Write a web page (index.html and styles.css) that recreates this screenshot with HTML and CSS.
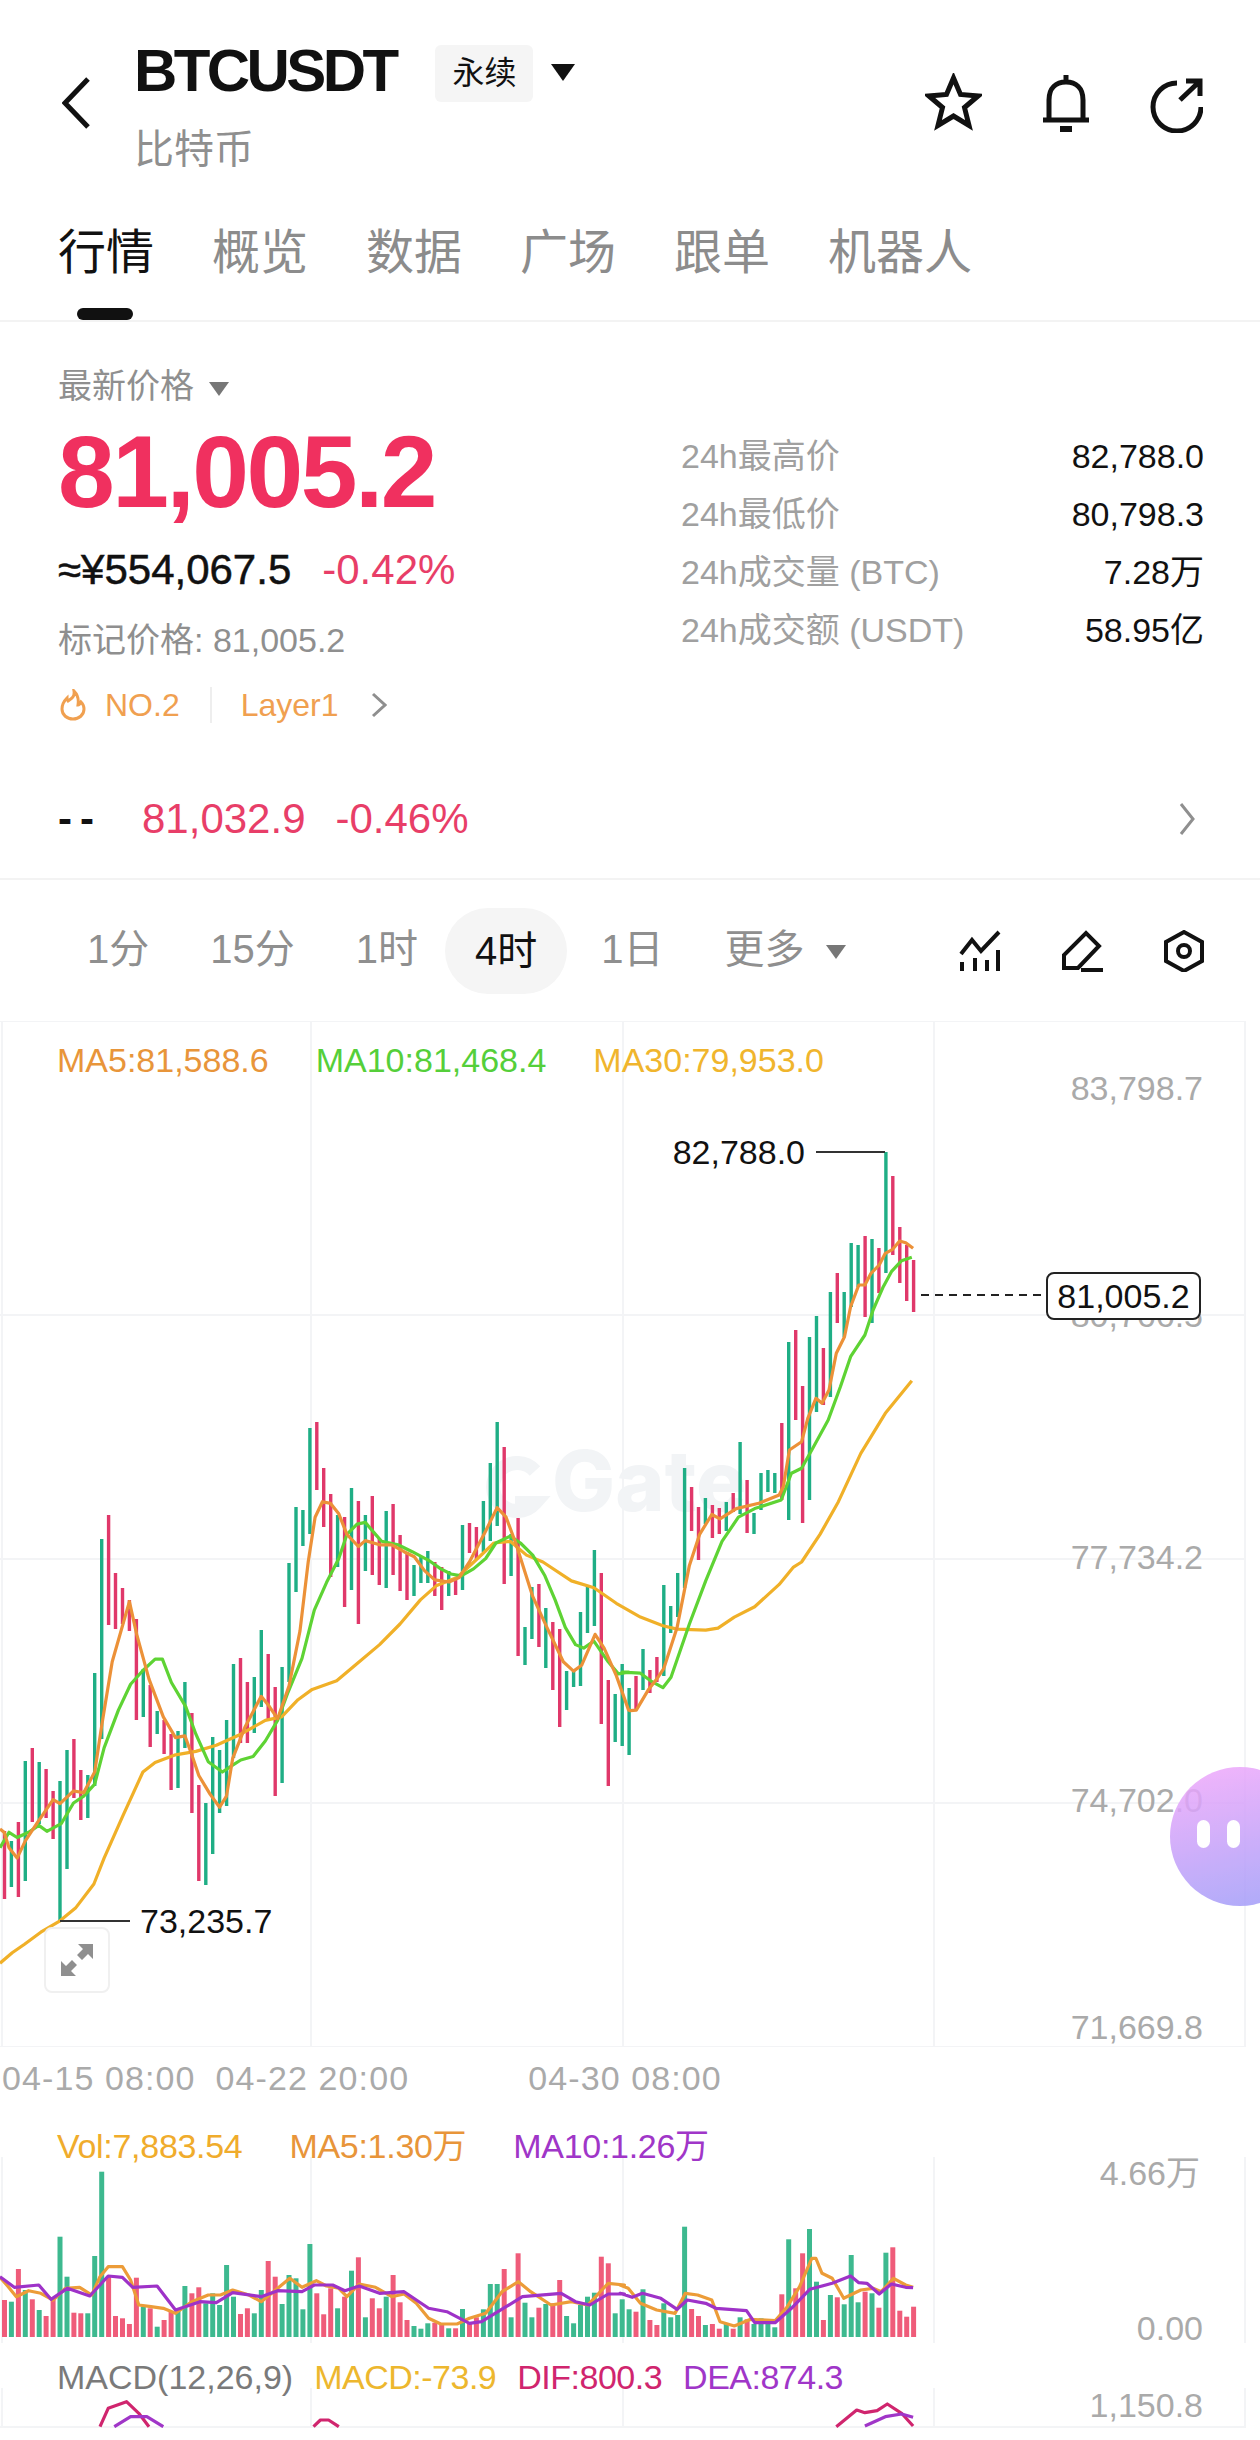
FILE: index.html
```html
<!DOCTYPE html>
<html lang="zh-CN">
<head>
    <meta charset="UTF-8">
    <meta name="viewport" content="width=device-width, initial-scale=1.0">
    <title>BTCUSDT 永续</title>
    <link rel="stylesheet" href="styles.css">
</head>
<body>
    <!-- Cabeçalho -->
    <header class="topbar">
        <svg class="back" viewBox="0 0 28 52"><path d="M26 2 3 26l23 24"/></svg>
        <div class="title">
            <div class="title-row">
                <span class="symbol">BTCUSDT</span>
                <span class="badge">永续</span>
                <span class="caret caret-dark"></span>
            </div>
            <div class="subname">比特币</div>
        </div>
        <div class="top-icons">
            <svg class="icon-star" viewBox="0 0 57 60"><path d="M28.500 5l7 16.500 17.500 1.500-13.500 11.500 4.500 18-15.500-9.500-15.500 9.500 4.500-18L4 23l17.500-1.500z"/></svg>
            <svg class="icon-bell" viewBox="0 0 50 60"><path d="M8 46V27C8 15 15 9 25 9s17 6 17 18v19M2 47h46M25 2v6"/><rect class="solid" x="19" y="53" width="12" height="6"/></svg>
            <svg class="icon-share" viewBox="0 0 53 60"><path d="M51 34A24 24 0 1 1 27 10M30 27 49 9M36 8h14v15"/></svg>
        </div>
    </header>

    <nav class="tabs">
        <span class="tab tab-active">行情</span>
        <span class="tab">概览</span>
        <span class="tab">数据</span>
        <span class="tab">广场</span>
        <span class="tab">跟单</span>
        <span class="tab">机器人</span>
    </nav>

    <!-- Preço -->
    <section class="summary">
        <div class="quote">
            <div class="price-label">最新价格 <span class="caret caret-gray"></span></div>
            <div class="big-price">81,005.2</div>
            <div class="cny-row">
                <span class="cny">≈¥554,067.5</span>
                <span class="down">-0.42%</span>
            </div>
            <div class="mark">标记价格: 81,005.2</div>
            <div class="tags">
                <svg class="flame" viewBox="0 0 26 32"><path d="M14 2c1 6-3 8-6 10-1-1-1-2-1-3-3 3-5 7-5 11 0 6 5 10 11 10s11-4 11-10c0-3-1-5-3-7-1 2-2 3-3 3 1-6-1-11-4-14z"/></svg>
                <span class="tag-no">NO.2</span>
                <span class="tag-layer">Layer1</span>
                <svg class="chevron" viewBox="0 0 16 26"><path d="M2 2l12 11L2 24"/></svg>
            </div>
        </div>
        <div class="stats">
            <div class="stat"><span>24h最高价</span><b>82,788.0</b></div>
            <div class="stat"><span>24h最低价</span><b>80,798.3</b></div>
            <div class="stat"><span>24h成交量 (BTC)</span><b>7.28万</b></div>
            <div class="stat"><span>24h成交额 (USDT)</span><b>58.95亿</b></div>
        </div>
    </section>

    <div class="ticker">
        <span class="dashes">--</span>
        <span class="down">81,032.9</span>
        <span class="down">-0.46%</span>
        <svg class="chevron ticker-arrow" viewBox="0 0 16 34"><path d="M2 2l12 15L2 32"/></svg>
    </div>

    <!-- Períodos -->
    <div class="periods">
        <span>1分</span>
        <span>15分</span>
        <span>1时</span>
        <span class="period-active">4时</span>
        <span>1日</span>
        <span class="more">更多 <i class="caret caret-gray"></i></span>
        <div class="period-icons">
            <svg viewBox="0 0 42 42"><path d="M2 24 13 10l9 11L40 2M3 32v9M16 28v13M28 30v11M39 20v21"/></svg>
            <svg viewBox="0 0 42 42"><path d="M3 38V25L25 3l13 13-21 22zM20 40h22"/></svg>
            <svg viewBox="0 0 42 42"><path d="M21 2l18 10v19L21 41 3 31V12z"/><circle cx="21" cy="21" r="6"/></svg>
        </div>
    </div>

    <!-- Gráfico principal -->
    <section class="pane pane-main">
        <svg class="chart" viewBox="0 1021 1260 1026" width="1260" height="1026">
            <g class="grid">
                <path d="M2 1021V2047M311 1021V2047M623 1021V2047M934 1021V2047M1245 1021V2047"/>
                <path d="M0 1021H1245M0 1315H1245M0 1559H1245M0 1803H1245M0 2047H1245"/>
            </g>
            <path class="gate-arc" d="M535 1471a24 24 0 1 0 0 32h-20"/>
            <text class="gate" x="552" y="1511">Gate</text>
            <g id="candles"></g>
            <polyline id="ma30" class="ma ma30"/>
            <polyline id="ma10" class="ma ma10"/>
            <polyline id="ma5" class="ma ma5"/>

            <path class="marker" d="M816 1152H885M60 1921H130"/>
            <text class="mark-text" x="805" y="1164" text-anchor="end">82,788.0</text>
            <text class="mark-text" x="140" y="1933">73,235.7</text>

            <g class="axis">
                <text x="1203" y="1100">83,798.7</text>
                <text x="1203" y="1327">80,766.5</text>
                <text x="1203" y="1569">77,734.2</text>
                <text x="1203" y="1812">74,702.0</text>
                <text x="1203" y="2039">71,669.8</text>
            </g>
            <path class="last-line" d="M921 1295H1042"/>
        </svg>
        <div class="legend legend-main">
            <span class="c-ma5">MA5:81,588.6</span>
            <span class="c-ma10">MA10:81,468.4</span>
            <span class="c-ma30">MA30:79,953.0</span>
        </div>
        <div class="last-tag">81,005.2</div>
        <div class="expand">
            <svg viewBox="0 0 34 34"><path d="M33 1v15l-5-5-6 6-5-5 6-6-5-5zM1 33V18l5 5 6-6 5 5-6 6 5 5z"/></svg>
        </div>
    </section>

    <div class="time-axis">
        <span>04-15 08:00</span>
        <span>04-22 20:00</span>
        <span class="time-third">04-30 08:00</span>
    </div>

    <!-- Volume -->
    <section class="pane pane-vol">
        <svg class="chart" viewBox="0 2106 1260 244" width="1260" height="244">
            <path class="grid-line" d="M2 2157V2343M311 2157V2343M623 2157V2343M934 2157V2343M1245 2157V2343"/>
            <g id="volumes"></g>
            <polyline id="vol5" class="ma vol5"/>
            <polyline id="vol10" class="ma vol10"/>
            <g class="axis">
                <text x="1200" y="2185">4.66万</text>
                <text x="1203" y="2340">0.00</text>
            </g>
        </svg>
        <div class="legend legend-vol">
            <span class="c-vol">Vol:7,883.54</span>
            <span class="c-ma5">MA5:1.30万</span>
            <span class="c-purple">MA10:1.26万</span>
        </div>
    </section>

    <!-- MACD -->
    <section class="pane pane-macd">
        <svg class="chart" viewBox="0 2350 1260 78" width="1260" height="78">
            <path class="grid-line" d="M2 2388V2428M311 2388V2428M623 2388V2428M934 2388V2428M1245 2388V2428M0 2427H1245"/>
            <g id="macd"></g>
            <g class="axis"><text x="1203" y="2417">1,150.8</text></g>
        </svg>
        <div class="legend legend-macd">
            <span class="c-gray">MACD(12,26,9)</span>
            <span class="c-macd">MACD:-73.9</span>
            <span class="c-dif">DIF:800.3</span>
            <span class="c-purple">DEA:874.3</span>
        </div>
    </section>

    <div class="assistant"><i></i><i></i></div>

    <script src="chart.js"></script>
</body>
</html>
```

FILE: styles.css
```css
* {
    box-sizing: border-box;
}
body {
    font-family: "Liberation Sans", "Noto Sans CJK SC", sans-serif;
    background-color: #ffffff;
    color: #111;
    margin: 0;
    width: 1260px;
    height: 2440px;
    overflow: hidden;
    position: relative;
}
svg path, svg circle {
    fill: none;
    stroke: #111;
    stroke-width: 5;
}

/* cabeçalho */
.topbar {
    display: flex;
    align-items: flex-start;
    height: 190px;
    padding: 40px 57px 0 62px;
}
.back {
    width: 28px;
    height: 52px;
    margin: 37px 44px 0 0;
}
.title-row {
    display: flex;
    align-items: center;
    height: 60px;
}
.symbol {
    font-size: 60px;
    font-weight: bold;
    letter-spacing: -3.6px;
}
.badge {
    width: 98px;
    height: 57px;
    margin: 6px 0 0 40px;
    background-color: #f5f5f5;
    border-radius: 6px;
    font-size: 32px;
    line-height: 57px;
    text-align: center;
}
.caret {
    display: inline-block;
    border-style: solid;
    border-color: transparent;
    border-width: 16px 11px 0;
}
.caret-dark {
    border-top-color: #111;
    margin: 4px 0 0 18px;
    border-width: 17px 12px 0;
}
.caret-gray {
    border-top-color: #777;
    border-width: 14px 10px 0;
    margin-left: 6px;
    vertical-align: middle;
}
.subname {
    margin-top: 24px;
    font-size: 40px;
    line-height: 50px;
    color: #8f8f8f;
}
.top-icons {
    display: flex;
    gap: 59px;
    margin: 33px 0 0 auto;
}
.top-icons svg {
    height: 60px;
}
.icon-star { width: 57px; }
.icon-bell { width: 50px; }
.icon-share { width: 53px; }
svg .solid {
    fill: #111;
}

.tabs {
    display: flex;
    gap: 58px;
    height: 132px;
    padding: 33px 0 0 58px;
    border-bottom: 2px solid #f3f3f3;
}
.tab {
    position: relative;
    height: 60px;
    font-size: 48px;
    line-height: 60px;
    color: #8c8c8c;
}
.tab-active {
    color: #111;
}
.tab-active::after {
    content: "";
    position: absolute;
    left: 19px;
    top: 85px;
    width: 56px;
    height: 12px;
    background-color: #111;
    border-radius: 6px;
}

/* preço */
.summary {
    display: flex;
    height: 438px;
    padding: 0 56px 0 58px;
}
.quote {
    width: 623px;
    padding-top: 42px;
}
.price-label {
    font-size: 34px;
    line-height: 44px;
    color: #8f8f8f;
}
.big-price {
    margin-top: 9px;
    font-size: 102px;
    line-height: 110px;
    font-weight: bold;
    letter-spacing: -2.5px;
    color: #f0305f;
}
.cny-row {
    display: flex;
    gap: 31px;
    margin-top: 18px;
    font-size: 42px;
    line-height: 50px;
}
.cny {
    -webkit-text-stroke: 0.5px #111;
}
.down {
    color: #e83e68;
}
.mark {
    margin-top: 23px;
    font-size: 34px;
    line-height: 44px;
    color: #8f8f8f;
}
.tags {
    display: flex;
    align-items: center;
    height: 44px;
    margin-top: 21px;
    font-size: 32px;
    color: #f0a050;
}
.flame {
    width: 26px;
    height: 32px;
    margin: 0 19px 0 2px;
}
.flame path {
    stroke: #f0a050;
    stroke-width: 3;
}
.tag-no {
    padding-right: 30px;
    border-right: 2px solid #eee;
    line-height: 36px;
}
.tag-layer {
    margin: 0 32px 0 29px;
}
.chevron {
    width: 16px;
    height: 26px;
}
.chevron path {
    stroke: #8f8f8f;
    stroke-width: 3;
}
.stats {
    flex: 1;
    margin-top: 105px;
}
.stat {
    display: flex;
    justify-content: space-between;
    height: 58px;
    font-size: 34px;
    line-height: 58px;
    color: #a0a0a0;
}
.stat b {
    font-weight: normal;
    color: #111;
}

.ticker {
    display: flex;
    align-items: center;
    height: 120px;
    padding: 0 65px 0 58px;
    border-bottom: 2px solid #f3f3f3;
    font-size: 42px;
}
.dashes {
    width: 84px;
    letter-spacing: 8px;
    font-weight: bold;
}
.ticker .down + .down {
    margin-left: 30px;
}
.ticker-arrow {
    height: 34px;
    margin-left: auto;
}

/* períodos */
.periods {
    display: flex;
    align-items: center;
    gap: 61px;
    height: 141px;
    padding: 0 55px 0 87px;
    font-size: 40px;
    color: #8f8f8f;
}
.periods span {
    padding-bottom: 9px;
}
.periods .period-active {
    padding: 0 30px;
    margin: 0 -27px 0 -34px;
    line-height: 86px;
    color: #111;
    background-color: #f5f5f5;
    border-radius: 43px;
}
.more .caret {
    margin-left: 10px;
}
.period-icons {
    display: flex;
    gap: 60px;
    margin-left: auto;
}
.period-icons svg {
    width: 42px;
    height: 42px;
}
.period-icons path, .period-icons circle {
    stroke-width: 4;
}

/* gráficos */
.pane {
    position: relative;
}
.chart {
    display: block;
}
.grid path, .grid-line {
    stroke: #f3f4f6;
    stroke-width: 2;
}
.gate-arc {
    stroke: #f2f4f6;
    stroke-width: 14;
}
.gate {
    font-family: "Inter", sans-serif;
    font-size: 84px;
    font-weight: 800;
    fill: #f2f4f6;
}
.ma {
    fill: none;
    stroke-width: 3.200;
    stroke-linejoin: round;
}
.ma5 { stroke: #ec9138; }
.ma10 { stroke: #5ed334; }
.ma30 { stroke: #f0b028; }
.vol5 { stroke: #ec9c38; }
.vol10 { stroke: #9e32c8; }
svg .marker {
    stroke: #333;
    stroke-width: 2;
}
.mark-text {
    font-size: 34px;
    fill: #111;
}
.axis text {
    font-size: 34px;
    fill: #aaa;
    text-anchor: end;
}
svg .last-line {
    stroke: #222;
    stroke-width: 2;
    stroke-dasharray: 8 6;
}
.legend {
    position: absolute;
    left: 57px;
    display: flex;
    font-size: 34px;
    line-height: 40px;
}
.legend-main {
    top: 19px;
    gap: 47px;
}
.legend-vol {
    top: 20px;
    gap: 47px;
    letter-spacing: -0.3px;
}
.legend-macd {
    top: 7px;
    gap: 21px;
}
.legend-macd .c-macd, .legend-macd .c-dif, .legend-macd .c-purple {
    letter-spacing: -0.5px;
}
.c-ma5 { color: #e8953a; }
.c-ma10 { color: #55cf3a; }
.c-ma30 { color: #f0b52d; }
.c-vol { color: #f0ac2c; }
.c-purple { color: #a036c8; }
.c-gray { color: #7a7a7a; }
.c-macd { color: #edb72e; }
.c-dif { color: #d0256e; }

.last-tag {
    position: absolute;
    left: 1046px;
    top: 251px;
    width: 155px;
    height: 48px;
    background-color: #ffffff;
    border: 2px solid #222;
    border-radius: 8px;
    font-size: 34px;
    line-height: 44px;
    text-align: center;
}
.expand {
    position: absolute;
    left: 44px;
    top: 906px;
    width: 66px;
    height: 66px;
    display: flex;
    align-items: center;
    justify-content: center;
    background-color: #ffffff;
    border: 2px solid #f0f0f0;
    border-radius: 8px;
}
.expand svg {
    width: 34px;
    height: 34px;
}
.expand path {
    fill: #8f8f8f;
    stroke: none;
}

.time-axis {
    display: flex;
    gap: 20px;
    height: 59px;
    padding-left: 2px;
    font-size: 34px;
    line-height: 62px;
    letter-spacing: 1.100px;
    color: #aaa;
}
.time-third {
    margin-left: 99px;
}

.assistant {
    position: absolute;
    left: 1170px;
    top: 1767px;
    width: 140px;
    height: 139px;
    display: flex;
    gap: 17px;
    padding: 53px 0 0 27px;
    border-radius: 50%;
    background: linear-gradient(165deg, #f3a8fb, #9c9cf9);
    opacity: 0.85;
}
.assistant i {
    width: 13px;
    height: 28px;
    background-color: #ffffff;
    border-radius: 7px;
}
```

FILE: chart.js
```js
// [topo, base, cor] de cada candle, em pixels da página
const candles = [
    [1831,1899,"r"],[1841,1887,"g"],[1822,1897,"r"],[1761,1881,"g"],[1748,1822,"r"],[1762,1824,"g"],
    [1769,1818,"r"],[1791,1839,"r"],[1781,1921,"g"],[1750,1869,"g"],[1739,1798,"r"],[1770,1820,"r"],
    [1775,1818,"g"],[1673,1786,"g"],[1539,1739,"g"],[1515,1625,"r"],[1573,1629,"r"],[1588,1624,"r"],
    [1600,1631,"r"],[1619,1720,"r"],[1669,1717,"g"],[1685,1747,"r"],[1711,1734,"g"],[1720,1754,"r"],
    [1734,1790,"r"],[1731,1788,"g"],[1682,1748,"g"],[1713,1813,"r"],[1785,1881,"r"],[1803,1885,"g"],
    [1737,1854,"g"],[1750,1813,"g"],[1720,1806,"g"],[1664,1758,"g"],[1658,1743,"r"],[1682,1743,"r"],
    [1677,1733,"g"],[1630,1707,"g"],[1654,1720,"r"],[1687,1796,"r"],[1667,1783,"g"],[1563,1682,"g"],
    [1507,1592,"g"],[1510,1546,"g"],[1428,1534,"g"],[1422,1490,"r"],[1468,1527,"r"],[1494,1577,"r"],
    [1515,1567,"g"],[1517,1607,"r"],[1488,1590,"g"],[1501,1624,"r"],[1515,1571,"g"],[1496,1575,"r"],
    [1538,1585,"r"],[1511,1588,"g"],[1504,1575,"r"],[1535,1591,"r"],[1552,1600,"r"],[1565,1596,"g"],
    [1557,1583,"g"],[1551,1583,"g"],[1562,1596,"r"],[1567,1610,"r"],[1571,1596,"g"],[1577,1595,"r"],
    [1525,1590,"g"],[1523,1553,"r"],[1527,1559,"r"],[1501,1552,"g"],[1463,1541,"g"],[1422,1526,"g"],
    [1447,1584,"r"],[1534,1576,"g"],[1518,1656,"r"],[1627,1665,"g"],[1587,1639,"g"],[1584,1647,"r"],
    [1608,1668,"g"],[1622,1690,"r"],[1629,1727,"r"],[1671,1710,"g"],[1669,1687,"g"],[1612,1686,"g"],
    [1586,1633,"g"],[1550,1626,"g"],[1573,1724,"r"],[1680,1786,"r"],[1694,1742,"g"],[1664,1746,"g"],
    [1688,1755,"g"],[1676,1710,"r"],[1649,1690,"g"],[1670,1693,"r"],[1657,1682,"r"],[1585,1676,"g"],
    [1606,1633,"g"],[1573,1617,"g"],[1468,1588,"g"],[1487,1531,"r"],[1507,1560,"r"],[1498,1524,"g"],
    [1505,1538,"r"],[1508,1534,"r"],[1502,1531,"g"],[1493,1512,"r"],[1442,1514,"g"],[1480,1533,"r"],
    [1513,1534,"g"],[1473,1510,"g"],[1470,1492,"g"],[1473,1493,"g"],[1423,1500,"r"],[1342,1520,"g"],
    [1330,1420,"r"],[1386,1523,"r"],[1337,1500,"g"],[1316,1412,"g"],[1348,1405,"r"],[1292,1397,"g"],
    [1273,1323,"r"],[1292,1337,"g"],[1243,1307,"g"],[1245,1287,"g"],[1236,1317,"r"],[1239,1323,"g"],
    [1248,1293,"r"],[1152,1273,"g"],[1176,1255,"r"],[1227,1283,"r"],[1245,1301,"r"],[1260,1312,"r"]
];

// topo das barras de volume, medido no recorte (2040 + v / 3)
const volumes = [
    780,785,687,750,778,810,828,780,590,710,818,820,820,648,395,710,828,835,852,713,800,805,860,840,
    815,810,738,760,742,790,760,795,675,770,822,805,820,750,663,710,792,705,715,808,612,760,823,745,
    805,770,692,652,832,775,805,770,705,787,840,858,866,850,848,850,865,865,807,850,832,808,732,732,
    687,832,640,788,832,803,792,790,720,828,850,795,770,758,650,670,820,778,808,815,748,840,855,790,
    832,825,560,807,828,855,852,866,850,866,832,838,852,835,850,862,763,598,745,640,567,725,840,765,
    772,793,645,787,755,760,803,638,622,812,830,800
];

const colors = { g: "#1fae85", r: "#e0386a" };
const volColors = { g: "#3db98f", r: "#ef5c7a" };
const NS = "http://www.w3.org/2000/svg";

function barX(i) {
    return 4.5 + 6.94 * i;
}

function addRect(parent, x, y, w, h, fill) {
    const r = document.createElementNS(NS, "rect");
    r.setAttribute("x", x.toFixed(1));
    r.setAttribute("y", y.toFixed(1));
    r.setAttribute("width", w);
    r.setAttribute("height", h.toFixed(1));
    r.setAttribute("fill", fill);
    parent.appendChild(r);
}

// converte pontos medidos nos recortes ampliados para pixels da página
function trace(ox, oy, sy, pts) {
    const out = [];
    for (let i = 0; i < pts.length; i += 2) {
        out.push((ox + pts[i] / 2.45).toFixed(1) + "," + (oy + pts[i + 1] / sy).toFixed(1));
    }
    return out;
}

const cropA = (pts) => trace(0, 1500, 2.904, pts);
const cropB = (pts) => trace(620, 1500, 2.904, pts);
const cropC = (pts) => trace(620, 1020, 3, pts);
const cropD = (pts) => trace(0, 2040, 3, pts);
const cropE = (pts) => trace(620, 2040, 3, pts);

function setLine(id, points) {
    document.getElementById(id).setAttribute("points", points.join(" "));
}

const candleGroup = document.getElementById("candles");
candles.forEach((c, i) => {
    addRect(candleGroup, barX(i) - 1.7, c[0], 3.4, c[1] - c[0], colors[c[2]]);
});

const volGroup = document.getElementById("volumes");
volumes.forEach((v, i) => {
    const top = 2040 + v / 3;
    addRect(volGroup, barX(i) - 2.5, top, 5, 2337 - top, volColors[candles[i][2]]);
});

setLine("ma5", [
    ...cropA([0,955,10,965,22,1010,42,1040,62,990,90,940,130,870,147,882,180,845,205,850,232,790,250,650,275,470,317,295,335,390,365,520,400,630,430,690,453,685,470,740,487,800,515,855,538,892,555,860,570,750,600,660,640,570,660,600,680,635,708,540,735,380,755,180,772,50,790,5,810,10,830,40,850,100,878,135,895,118,930,130,960,130,990,150,1015,165,1040,205,1065,232,1100,238,1125,225,1150,180,1190,90,1218,22,1240,50,1265,130,1305,280,1340,370,1380,470,1405,497,1425,480,1458,390,1480,430,1510,510,1540,610]),
    ...cropB([25,612,40,610,70,550,90,520,107,490,140,370,170,190,195,100,225,42,245,55,285,25]),
    ...cropC([340,1450,390,1425,400,1400,415,1290,445,1265,460,1195,480,1135,495,1150,512,1110,530,1000,550,950,565,860,585,795,600,795,615,760,635,735,650,700,668,688,685,663,700,668,718,685])
]);

setLine("ma10", [
    ...cropA([0,1010,22,965,42,980,70,965,95,945,115,962,150,940,180,880,205,860,232,825,255,720,290,610,320,535,350,495,380,462,398,462,420,530,455,600,480,680,510,760,545,790,570,770,590,755,620,745,650,700,680,640,705,560,740,460,770,320,800,240,830,170,850,100,875,70,895,65,920,100,935,120,975,130,1010,150,1050,175,1080,200,1105,215,1130,220,1160,200,1190,170,1215,125,1250,105,1275,125,1305,160,1335,220,1360,290,1385,370,1410,420,1430,430,1455,410,1490,470,1515,505,1540,500]),
    ...cropB([5,500,50,503,75,525,105,545,125,515,170,360,210,235,250,120,290,50,330,25]),
    ...cropC([395,1440,420,1360,445,1345,470,1290,510,1200,540,1100,565,1010,600,945,620,870,645,800,665,755,690,722,715,712])
]);

setLine("ma30", [
    ...cropA([0,1345,30,1315,60,1290,100,1255,147,1222,185,1185,230,1115,255,1040,300,920,350,790,380,762,430,740,480,730,530,712,590,680,650,640,690,630,730,580,765,550,825,525,870,480,930,420,980,360,1030,290,1070,248,1120,225,1170,170,1210,125,1250,120,1290,160,1330,180,1400,235,1455,255,1510,300]),
    ...cropB([5,310,50,340,105,365,140,375,210,378,240,372,280,340,330,310,390,245,425,195,445,180,490,100,535,5]),
    ...cropC([590,1300,650,1180,715,1082])
]);

setLine("vol5", [
    ...cropD([0,712,20,740,40,770,70,752,100,760,130,780,160,745,195,742,225,765,245,710,265,680,300,680,320,720,340,795,370,800,400,805,430,820,470,785,510,765,540,765,570,750,610,765,640,785,670,755,710,715,740,742,775,722,800,738,830,745,850,770,880,732,920,742,960,770,990,762,1020,790,1050,835,1080,852,1120,852,1150,835,1190,820,1230,755,1270,725,1300,755,1350,795,1400,785,1440,795,1490,730,1530,735]),
    ...cropE([0,735,20,745,50,790,90,810,135,820,160,760,190,765,225,780,245,845,280,858,320,838,380,842,410,800,440,740,470,655,480,655,495,700,520,715,548,775,590,750,620,745,640,755,670,715,700,735,718,742])
]);

setLine("vol10", [
    ...cropD([0,710,35,742,95,735,125,778,165,745,220,768,265,708,300,712,325,742,385,738,430,810,490,785,530,788,570,758,640,770,680,752,740,755,770,735,815,735,845,752,880,738,930,760,990,755,1050,805,1095,815,1150,850,1180,845,1240,800,1280,770,1375,760,1410,785,1445,795,1490,762,1530,762]),
    ...cropE([0,760,30,772,55,760,100,775,140,808,165,780,210,790,235,805,310,812,330,848,380,848,420,805,465,748,520,730,565,708,585,728,605,730,635,762,665,732,700,742,718,743])
]);

// trechos visíveis do MACD
const macdLines = [
    ["#d0256e", cropD([245,1160,265,1105,310,1085,340,1120,365,1160])],
    ["#a036c8", cropD([280,1160,320,1130,360,1130,400,1160])],
    ["#d0256e", cropD([768,1160,785,1140,805,1140,830,1160])],
    ["#d0256e", cropE([530,1160,580,1110,600,1118,630,1112,655,1092,690,1120,718,1158])],
    ["#a036c8", cropE([600,1158,650,1130,690,1122,718,1132])]
];
const macdGroup = document.getElementById("macd");
macdLines.forEach(([color, points]) => {
    const line = document.createElementNS(NS, "polyline");
    line.setAttribute("points", points.join(" "));
    line.setAttribute("class", "ma");
    line.setAttribute("stroke", color);
    macdGroup.appendChild(line);
});
```
